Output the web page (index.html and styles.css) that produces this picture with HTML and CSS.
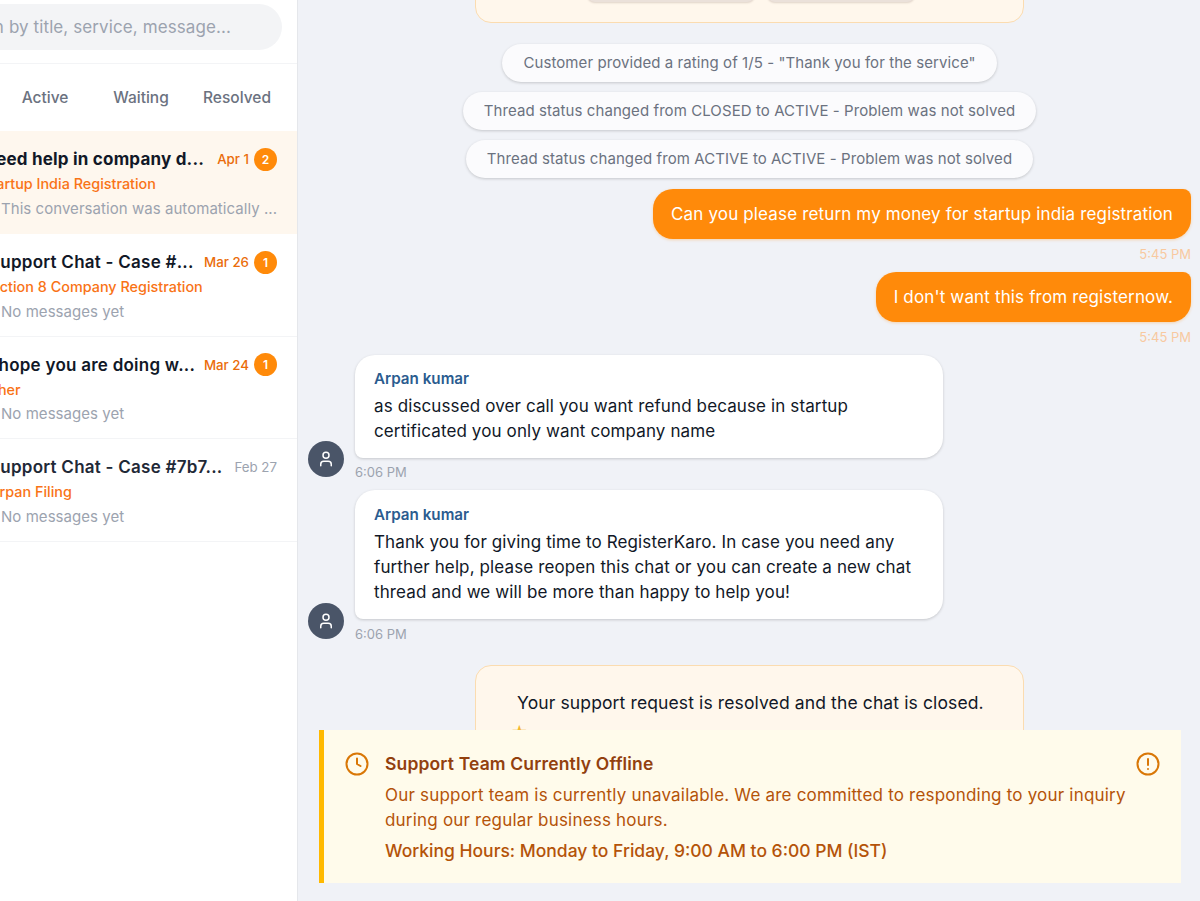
FILE: index.html
```html
<!DOCTYPE html>
<html lang="en">
<head>
    <meta charset="UTF-8">
    <meta name="viewport" content="width=device-width, initial-scale=1.0">
    <title>Support Chat</title>
    <link rel="stylesheet" href="styles.css">
</head>
<body>
<div class="app">

  <!-- Thread list, scrolled sideways so its left edge is cut off -->
  <aside class="sidebar">
    <div class="search_box">
      <div class="search_input">Search by title, service, message...</div>
    </div>
    <div class="tabs">
      <div class="tab">All</div>
      <div class="tab">Active</div>
      <div class="tab">Waiting</div>
      <div class="tab">Resolved</div>
    </div>

    <div class="thread selected">
      <div class="thread_top">
        <span class="thread_title strong">Need help in company d...</span>
        <span class="thread_date new">Apr 1</span>
        <span class="badge">2</span>
      </div>
      <div class="thread_service">Startup India Registration</div>
      <div class="thread_preview">This conversation was automatically ...</div>
    </div>
    <div class="thread">
      <div class="thread_top">
        <span class="thread_title strong">Support Chat - Case #...</span>
        <span class="thread_date new">Mar 26</span>
        <span class="badge">1</span>
      </div>
      <div class="thread_service">Section 8 Company Registration</div>
      <div class="thread_preview">No messages yet</div>
    </div>
    <div class="thread">
      <div class="thread_top">
        <span class="thread_title strong">I hope you are doing w...</span>
        <span class="thread_date new">Mar 24</span>
        <span class="badge">1</span>
      </div>
      <div class="thread_service">Other</div>
      <div class="thread_preview">No messages yet</div>
    </div>
    <div class="thread">
      <div class="thread_top">
        <span class="thread_title">Support Chat - Case #7b7...</span>
        <span class="thread_date">Feb 27</span>
      </div>
      <div class="thread_service">Sarpan Filing</div>
      <div class="thread_preview">No messages yet</div>
    </div>
  </aside>

  <!-- Conversation -->
  <main class="chat">
    <div class="messages">
      <div class="notice_card top_card">
        <div class="card_buttons">
          <div class="card_button one"></div>
          <div class="card_button two"></div>
        </div>
      </div>

      <div class="pills">
        <div class="pill">Customer provided a rating of 1/5 - "Thank you for the service"</div>
        <div class="pill">Thread status changed from CLOSED to ACTIVE - Problem was not solved</div>
        <div class="pill">Thread status changed from ACTIVE to ACTIVE - Problem was not solved</div>
      </div>

      <div class="sent">
        <div class="sent_bubble">Can you please return my money for startup india registration</div>
        <div class="sent_time">5:45 PM</div>
      </div>
      <div class="sent">
        <div class="sent_bubble">I don't want this from registernow.</div>
        <div class="sent_time">5:45 PM</div>
      </div>

      <div class="received">
        <div class="avatar">
          <svg width="18" height="18" viewBox="0 0 24 24" fill="none" stroke="#fff" stroke-width="2" stroke-linecap="round" stroke-linejoin="round"><path d="M19 21v-2a4 4 0 0 0-4-4H9a4 4 0 0 0-4 4v2"/><circle cx="12" cy="7" r="4"/></svg>
        </div>
        <div class="received_body">
          <div class="received_bubble">
            <div class="sender">Arpan kumar</div>
            <div>as discussed over call you want refund because in startup certificated you only want company name</div>
          </div>
          <div class="received_time">6:06 PM</div>
        </div>
      </div>
      <div class="received">
        <div class="avatar">
          <svg width="18" height="18" viewBox="0 0 24 24" fill="none" stroke="#fff" stroke-width="2" stroke-linecap="round" stroke-linejoin="round"><path d="M19 21v-2a4 4 0 0 0-4-4H9a4 4 0 0 0-4 4v2"/><circle cx="12" cy="7" r="4"/></svg>
        </div>
        <div class="received_body">
          <div class="received_bubble">
            <div class="sender">Arpan kumar</div>
            <div>Thank you for giving time to RegisterKaro. In case you need any further help, please reopen this chat or you can create a new chat thread and we will be more than happy to help you!</div>
          </div>
          <div class="received_time">6:06 PM</div>
        </div>
      </div>

      <div class="notice_card bottom_card">
        <div class="closed_text">Your support request is resolved and the chat is closed.</div>
        <div class="stars">★</div>
      </div>
    </div>

    <!-- Offline banner sits over the bottom of the conversation -->
    <div class="offline_banner">
      <svg class="banner_icon" width="24" height="24" viewBox="0 0 24 24" fill="none" stroke="#d97706" stroke-width="2" stroke-linecap="round" stroke-linejoin="round"><circle cx="12" cy="12" r="10.5"/><path d="M12 6.5V12l3.5 2"/></svg>
      <div class="banner_text">
        <div class="banner_title">Support Team Currently Offline</div>
        <div class="banner_desc">Our support team is currently unavailable. We are committed to responding to your inquiry during our regular business hours.</div>
        <div class="banner_hours">Working Hours: Monday to Friday, 9:00 AM to 6:00 PM (IST)</div>
      </div>
      <svg class="banner_icon" width="24" height="24" viewBox="0 0 24 24" fill="none" stroke="#d97706" stroke-width="2" stroke-linecap="round" stroke-linejoin="round"><circle cx="12" cy="12" r="10.5"/><path d="M12 7v6"/><path d="M12 17h.01"/></svg>
    </div>
  </main>
</div>
</body>
</html>
```

FILE: styles.css
```css
*, *::before, *::after {
    box-sizing: border-box;
}

body {
    margin: 0;
    background-color: #f0f2f7;
    font-family: Inter, "Liberation Sans", sans-serif;
    color: #1f2937;
    overflow: hidden;
}

.app {
    display: flex;
    height: 901px;
    overflow: hidden;
}

/* Sidebar starts left of the window, only its right part shows */
.sidebar {
    flex: none;
    width: 397px;
    margin-left: -99px;
    background-color: #fff;
    border-right: 1px solid #e5e7eb;
}

.search_box {
    height: 64px;
    padding: 4px 15px 0 16px;
    border-bottom: 1px solid #f3f4f6;
}

.search_input {
    height: 46px;
    padding-left: 30px;
    line-height: 46px;
    border-radius: 23px;
    background-color: #f3f4f6;
    color: #9ca3af;
    font-size: 17px;
    letter-spacing: 0.1px;
}

.tabs {
    display: flex;
    height: 67px;
    padding: 0 12px 0 0;
    align-items: center;
}

.tab {
    flex: 1;
    text-align: center;
    font-size: 15.5px;
    font-weight: 500;
    color: #6b7280;
}

.thread {
    height: 102.5px;
    padding: 16px 20px 0 88px;
    border-bottom: 1px solid #f3f4f6;
}

.thread.selected {
    height: 103px;
    background-color: #fef7ee;
    border-bottom: none;
}

.thread_top {
    display: flex;
    align-items: center;
    height: 24px;
}

.thread_title {
    flex: 1;
    min-width: 0;
    white-space: nowrap;
    font-size: 17px;
    font-weight: 600;
    letter-spacing: 0.25px;
    color: #1f2937;
}

.thread_title.strong {
    color: #111827;
}

.selected .thread_title {
    margin-left: -6px;
    font-weight: 700;
    letter-spacing: 0.2px;
}

.thread_date {
    font-size: 13.3px;
    color: #9ca3af;
}

.thread_date.new {
    color: #ea6c0a;
    font-weight: 500;
}

.badge {
    flex: none;
    width: 23px;
    height: 23px;
    margin-left: 5px;
    border-radius: 50%;
    background-color: #ff8a0a;
    color: #fff;
    font-size: 12px;
    font-weight: 600;
    line-height: 23px;
    text-align: center;
}

.thread_service {
    margin-top: 3px;
    margin-left: -7px;
    font-size: 14.4px;
    line-height: 20px;
    font-weight: 500;
    color: #f97316;
}

.thread_preview {
    margin-top: 4.5px;
    padding-left: 12px;
    font-size: 15px;
    line-height: 20px;
    letter-spacing: 0.05px;
    color: #9ca3af;
    white-space: nowrap;
}

.chat {
    position: relative;
    flex: 1;
    min-width: 0;
    height: 901px;
    overflow: hidden;
}

.messages {
    display: flex;
    flex-direction: column;
    padding: 0 9px 0 10px;
}

.notice_card {
    align-self: center;
    width: 549px;
    border: 1px solid #fbdcb0;
    background-color: #fff7ec;
}

.top_card {
    height: 60px;
    margin-top: -37px;
    border-radius: 0 0 16px 16px;
}

.card_buttons {
    display: flex;
    justify-content: center;
    gap: 12px;
    margin-left: 3px;
    height: 38px;
}

.card_button {
    height: 100%;
    border-radius: 8px;
    background-color: #ebe1da;
    box-shadow: 0 1px 2px rgba(80, 50, 40, 0.18);
}

.card_button.one {
    width: 168px;
}

.card_button.two {
    width: 148px;
}

.pills {
    display: flex;
    flex-direction: column;
    align-items: center;
    gap: 10px;
    margin: 21px 0 11px 0;
}

.pill {
    height: 38px;
    padding: 0 21px;
    line-height: 37px;
    border-radius: 19px;
    background-color: #fbfbfd;
    box-shadow: 0 1px 3px rgba(0, 0, 0, 0.18);
    color: #6b7280;
    font-size: 15px;
    letter-spacing: 0.08px;
    white-space: nowrap;
}

.sent {
    display: flex;
    flex-direction: column;
    align-items: flex-end;
    margin-bottom: 10px;
}

.sent_bubble {
    height: 50px;
    padding: 0 18px;
    line-height: 50px;
    border-radius: 20px 8px 20px 20px;
    background-color: #ff8a0a;
    box-shadow: 0 1px 3px rgba(255, 138, 10, 0.3);
    color: #fff;
    font-size: 17px;
    letter-spacing: 0.15px;
}

.sent_time {
    margin-top: 7px;
    font-size: 13px;
    line-height: 16px;
    color: #f8c9a0;
}

.received {
    display: flex;
    align-items: flex-end;
    gap: 11px;
    margin-bottom: 10px;
}

.received + .received {
    margin-bottom: 23px;
}

.avatar {
    flex: none;
    display: flex;
    align-items: center;
    justify-content: center;
    width: 36px;
    height: 36px;
    margin-bottom: 3px;
    border-radius: 50%;
    background-color: #4a5568;
}

.received_bubble {
    width: 588px;
    padding: 14px 19px 14.5px 19px;
    border-radius: 20px 20px 20px 8px;
    background-color: #fff;
    box-shadow: 0 1px 3px rgba(0, 0, 0, 0.18);
    color: #111827;
    font-size: 17px;
    line-height: 25px;
    letter-spacing: 0.12px;
}

.received + .received .received_bubble {
    padding-top: 15px;
}

.received + .received .received_time {
    margin-top: 7px;
}

.sender {
    font-size: 15.2px;
    font-weight: 600;
    line-height: 20px;
    letter-spacing: 0;
    margin-bottom: 4.5px;
    color: #2b5c8f;
}

.received_time {
    margin-top: 6px;
    font-size: 13px;
    line-height: 16px;
    color: #9ca3af;
}

.bottom_card {
    height: 120px;
    padding: 24px 41px;
    border-radius: 16px 16px 0 0;
    font-size: 17.5px;
    letter-spacing: 0.12px;
    color: #111827;
}

.closed_text {
    line-height: 25px;
    white-space: nowrap;
}

.stars {
    margin-top: 7px;
    margin-left: -6px;
    color: #f5b82e;
    font-size: 16px;
    line-height: 20px;
}

.offline_banner {
    position: absolute;
    left: 21px;
    top: 730px;
    display: flex;
    gap: 16px;
    width: 862px;
    height: 153px;
    padding: 21px 21px 0 21px;
    border-left: 5px solid #ffb900;
    background-color: #fffbeb;
}

.banner_icon {
    flex: none;
    margin-top: 1px;
}

.banner_text {
    flex: 1;
    min-width: 0;
    margin-right: -12px;
    color: #b45309;
    font-size: 17px;
    line-height: 25px;
}

.banner_title {
    margin-bottom: 7px;
    font-size: 17.5px;
    font-weight: 600;
    letter-spacing: 0.15px;
    color: #92400e;
}

.banner_desc {
    letter-spacing: 0.2px;
}

.banner_hours {
    margin-top: 5px;
    font-size: 17.5px;
    font-weight: 500;
}
```
